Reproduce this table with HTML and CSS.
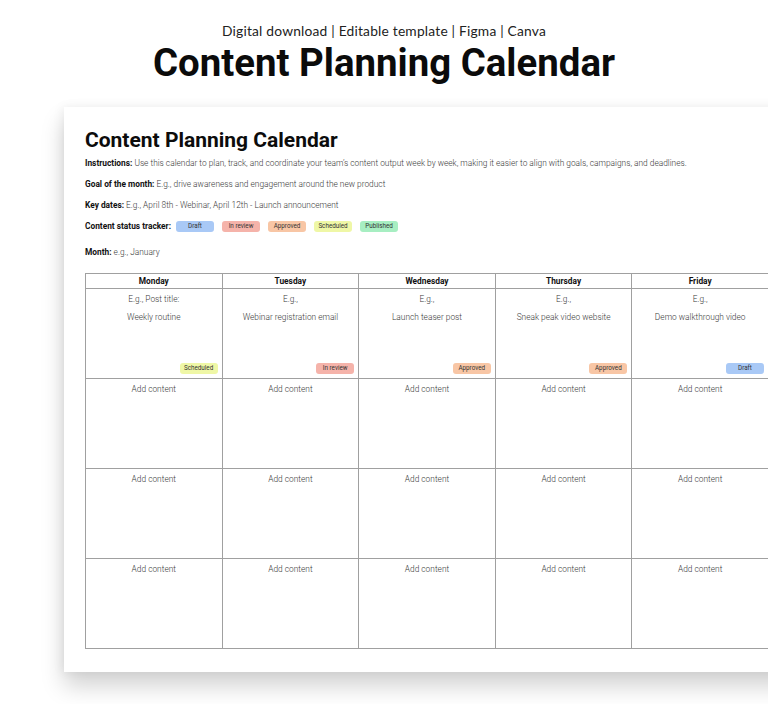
FILE: index.html
```html
<!DOCTYPE html>
<html lang="en">
<head>
<meta charset="utf-8">
<title>Content Planning Calendar</title>
<link rel="stylesheet" href="styles.css">
</head>
<body>
<header class="hero">
  <p class="hero-sub">Digital download | Editable template | Figma | Canva</p>
  <h1 class="hero-title">Content Planning Calendar</h1>
</header>
<main class="sheet">
  <h2 class="sheet-title">Content Planning Calendar</h2>
  <p class="line line-first"><b>Instructions:</b> Use this calendar to plan, track, and coordinate your team’s content output week by week, making it easier to align with goals, campaigns, and deadlines.</p>
  <p class="line"><b>Goal of the month:</b> E.g., drive awareness and engagement around the new product</p>
  <p class="line"><b>Key dates:</b> E.g., April 8th - Webinar, April 12th - Launch announcement</p>
  <div class="line tracker">
    <b>Content status tracker:</b>
    <span class="tag tag-draft">Draft</span>
    <span class="tag tag-review">In review</span>
    <span class="tag tag-approved">Approved</span>
    <span class="tag tag-scheduled">Scheduled</span>
    <span class="tag tag-published">Published</span>
  </div>
  <p class="line line-month"><b>Month:</b> e.g., January</p>

  <div class="cal">
    <div class="head">Monday</div>
    <div class="head">Tuesday</div>
    <div class="head">Wednesday</div>
    <div class="head">Thursday</div>
    <div class="head">Friday</div>

    <div class="cell"><p>E.g., Post title:</p><p>Weekly routine</p><span class="tag tag-scheduled">Scheduled</span></div>
    <div class="cell"><p>E.g.,</p><p>Webinar registration email</p><span class="tag tag-review">In review</span></div>
    <div class="cell"><p>E.g.,</p><p>Launch teaser post</p><span class="tag tag-approved">Approved</span></div>
    <div class="cell"><p>E.g.,</p><p>Sneak peak video website</p><span class="tag tag-approved">Approved</span></div>
    <div class="cell"><p>E.g.,</p><p>Demo walkthrough video</p><span class="tag tag-draft">Draft</span></div>

    <div class="cell"><p>Add content</p></div>
    <div class="cell"><p>Add content</p></div>
    <div class="cell"><p>Add content</p></div>
    <div class="cell"><p>Add content</p></div>
    <div class="cell"><p>Add content</p></div>

    <div class="cell"><p>Add content</p></div>
    <div class="cell"><p>Add content</p></div>
    <div class="cell"><p>Add content</p></div>
    <div class="cell"><p>Add content</p></div>
    <div class="cell"><p>Add content</p></div>

    <div class="cell"><p>Add content</p></div>
    <div class="cell"><p>Add content</p></div>
    <div class="cell"><p>Add content</p></div>
    <div class="cell"><p>Add content</p></div>
    <div class="cell"><p>Add content</p></div>
  </div>
</main>
</body>
</html>
```
FILE: styles.css
```css
html, body {
  margin: 0;
  padding: 0;
  background: #ffffff;
  overflow: hidden;
  width: 768px;
  height: 704px;
}
body {
  font-family: Roboto, "Liberation Sans", sans-serif;
  color: #111;
}
.hero {
  text-align: center;
  padding-top: 22px;
}
.hero-sub {
  margin: 0;
  font-family: Lato, "Open Sans", sans-serif;
  font-size: 13.8px;
  line-height: 18px;
  color: #222;
  letter-spacing: 0.2px;
}
.hero-title {
  margin: 2px 0 0;
  font-family: Roboto, sans-serif;
  font-weight: 700;
  font-size: 38.4px;
  line-height: 42px;
  color: #0b0b0b;
}
.sheet {
  margin: 23px 0 0 64px;
  width: 760px;
  box-sizing: border-box;
  background: #fff;
  padding: 20px 0 23px 21px;
  box-shadow: 0 14px 22px rgba(0, 0, 0, 0.18), -2px 0 10px rgba(0, 0, 0, 0.06);
}
.sheet-title {
  margin: 0;
  font-size: 21px;
  font-weight: 700;
  line-height: 26px;
  color: #0c0c0c;
}
.line {
  margin: 9px 0 0;
  font-size: 8.35px;
  line-height: 12px;
  color: #3a3a3a;
  font-weight: 300;
  white-space: nowrap;
}
.line b {
  color: #111;
  font-weight: 700;
}
.line-first { margin-top: 4px; }
.tracker {
  display: flex;
  align-items: center;
  gap: 8px;
}
.tracker b { margin-right: -3px; }
.line-month { margin-top: 14px; }
.tag {
  display: inline-block;
  box-sizing: border-box;
  width: 38px;
  height: 11px;
  line-height: 11px;
  text-align: center;
  border-radius: 3px;
  font-size: 6.3px;
  color: #333;
  font-weight: 400;
}
.tag-draft { background: #a9c9f6; }
.tag-review { background: #f5b3aa; }
.tag-approved { background: #f8c6a5; }
.tag-scheduled { background: #eff7a6; }
.tag-published { background: #a7eec2; }

.cal {
  margin-top: 15px;
  display: grid;
  grid-template-columns: repeat(5, 136.6px);
  grid-template-rows: 15px repeat(4, 90px);
  border-top: 1px solid #a0a0a0;
  border-left: 1px solid #a0a0a0;
}
.head, .cell {
  border-right: 1px solid #a0a0a0;
  border-bottom: 1px solid #a0a0a0;
  text-align: center;
  font-size: 8.35px;
}
.head {
  font-weight: 700;
  line-height: 15px;
  color: #111;
}
.cell {
  display: flex;
  flex-direction: column;
  align-items: center;
  padding-top: 4px;
  color: #3a3a3a;
  font-weight: 300;
}
.cell p {
  margin: 0 0 6px;
  line-height: 12px;
}
.cell .tag {
  margin-top: auto;
  align-self: flex-end;
  margin-right: 4px;
  margin-bottom: 4px;
}
```
